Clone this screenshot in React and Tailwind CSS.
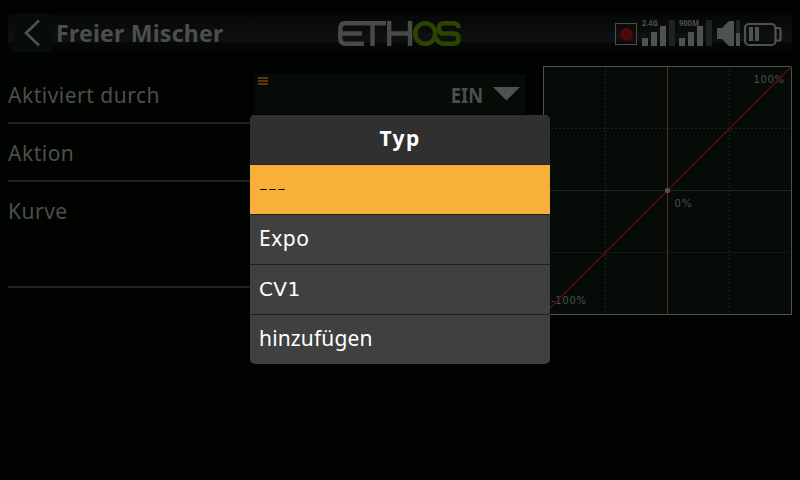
const LABEL = "font-['Noto_Sans',sans-serif] whitespace-nowrap";

function SettingRow({ label, className, children }) {
  return (
    <div className={`flex w-[517px] justify-between border-b-2 border-[#1f2320] ${className}`}>
      <span className="pt-[14px] text-[21px] leading-[30px] tracking-[0.5px] text-[#4c4f4c]">{label}</span>
      {children}
    </div>
  );
}

function BackButton() {
  return (
    <div className="ml-[6px] h-[38px] w-[38px] bg-[#070b09]">
      <svg width="38" height="38" fill="none" stroke="#4f524f" strokeWidth="2.6">
        <path d="M25 6.500 12 19 25 31.500" />
      </svg>
    </div>
  );
}

function Logo() {
  return (
    <svg className="absolute left-[338px] top-[20px]" width="126" height="28" fill="none">
      <g stroke="#484a48" strokeWidth="4.400">
        <path d="M26 3.300H7.500Q2.300 3.300 2.300 8.500V18.500Q2.300 23.700 7.500 23.700H26M3 13.500H24M22 3.300H48M34.500 4V26M51.200 1V26M72 1V26M52 13.500H72" />
      </g>
      <g stroke="#2b4400" strokeWidth="4.600">
        <rect x="77.300" y="3.300" width="20" height="20.400" rx="10" />
        <path d="M120.500 8Q120.500 3.300 115.500 3.300H106Q101 3.300 101 8.400T106 13.500H115.500Q120.500 13.500 120.500 18.600T115.500 23.700H106Q100 23.700 98.500 18" />
      </g>
    </svg>
  );
}

function StatusIcons() {
  return (
    <svg className="absolute left-[610px] top-[16px]" width="176" height="34" fontFamily="Noto Sans, sans-serif">
      <rect x="5.500" y="7.500" width="21" height="21" fill="none" stroke="#4b4e4b" />
      <circle cx="16.500" cy="18.500" r="6.500" fill="#500707" />
      <g fill="#4f534f">
        <path d="M32 22h6v8h-6zM41 16h6v14h-6zM50 10h6v20h-6z" />
        <path d="M69 22h6v8h-6zM78 16h6v14h-6zM87 10h6v20h-6z" />
        <path d="M107 12h5L119 5h5V30h-5L112 23h-5zM126 17h4v13h-4z" />
        <path d="M139 11h4v14h-4zM145 11h4v14h-4z" />
      </g>
      <path d="M59 4h6v26h-6zM96 4h6v26h-6zM126 4h4v13h-4z" fill="#1f2320" />
      <g fill="#4b4e4b" fontSize="8" fontWeight="700">
        <text x="32" y="10" textLength="16" lengthAdjust="spacingAndGlyphs">2.4G</text>
        <text x="69" y="10" textLength="20" lengthAdjust="spacingAndGlyphs">900M</text>
      </g>
      <g fill="none" stroke="#4f534f" strokeWidth="2.200">
        <rect x="135" y="8" width="30.500" height="21" rx="4" />
        <path d="M166 12h3q1.500 0 1.500 1.500v9.500q0 1.500-1.500 1.500h-3" />
      </g>
    </svg>
  );
}

function CurveChart() {
  return (
    <svg className="ml-[18px] mt-[14px] bg-[#060b07]" width="249" height="249" fontFamily="DejaVu Sans, sans-serif" fontSize="10">
      <g fill="none" stroke="#1f2420" shapeRendering="crispEdges">
        <path d="M0 62.500H249M0 186.500H249M62.500 0V249M186.500 0V249" strokeDasharray="2 2" />
        <path d="M0 124.500H249" />
        <path d="M124.500 0V249" stroke="#50350d" />
        <rect x="0.500" y="0.500" width="248" height="248" stroke="#4f524f" />
      </g>
      <g fill="#4c4f4c">
        <text x="210.500" y="16.500" textLength="30.500">100%</text>
        <text x="131.500" y="140.500" textLength="17">0%</text>
        <text x="8" y="237.500" textLength="35">-100%</text>
      </g>
      <path d="M0 249 249 0" stroke="#530c0c" strokeWidth="1.300" />
      <circle cx="124.500" cy="124.500" r="2.600" fill="#505350" />
    </svg>
  );
}

const choices = [
  { text: "---", style: "bg-[#f9b039] pt-[8px] font-['DejaVu_Sans',sans-serif] text-[24px] font-extralight tracking-[0.3px] text-black" },
  { text: "Expo", style: "pt-[8px] text-[21px] tracking-[0.5px] text-white" },
  { text: "CV1", style: "pt-[9px] font-['DejaVu_Sans',sans-serif] text-[20px] tracking-[0.4px] text-white" },
  { text: "hinzufügen", style: "pt-[8px] text-[21px] tracking-[0.15px] text-white" },
];

function TypeDialog() {
  return (
    <div className="absolute left-[250px] top-[115px] w-[300px] overflow-hidden rounded-[5px] bg-[#404040]">
      <div className="h-[49px] bg-[#303030] pt-[8px] text-center text-[21px] font-bold leading-[30px] tracking-[1.4px] text-white">Typ</div>
      {choices.map(({ text, style }) => (
        <div key={text} className={`h-[50px] border-t border-[#202020] pl-[9px] leading-[30px] ${style}`}>
          {text}
        </div>
      ))}
    </div>
  );
}

export default function App() {
  return (
    <div className={`relative h-[480px] w-[800px] overflow-hidden bg-[#000300] ${LABEL}`}>
      <header className="mx-2 flex h-[52px] items-center bg-[linear-gradient(to_bottom,#000300_0px,#000300_13px,#050807_16px,#080b09_23px,#0b0e0c_33px,#0f1110_34px,#0e100f_41px,#060807_43px,#030504_50px,#000200_52px)] pt-[14px]">
        <BackButton />
        <h1 className="ml-[4px] text-[23px] font-bold leading-[38px] tracking-[0.25px] text-[#4c4f4c]">Freier Mischer</h1>
        <Logo />
        <StatusIcons />
      </header>
      <main className="ml-2 flex">
        <div className="pt-[14px]">
          <SettingRow label="Aktiviert durch" className="h-[58px]">
            <div className="mt-[8px] flex h-[40px] w-[270px] justify-between bg-[#060b07]">
              <svg className="ml-[3px] mt-[3px]" width="10" height="8" fill="#5b390e">
                <path d="M0 0h10v2H0zM0 3h10v2H0zM0 6h10v2H0z" />
              </svg>
              <div className="flex pr-[5px] pt-[6px]">
                <span className="mr-[10px] origin-right scale-x-[0.87] text-[21px] font-bold leading-[30px] text-[#4c4f4c]">EIN</span>
                <svg className="mt-[7px]" width="27" height="14" fill="#4f534f">
                  <path d="M0 0H27L13.500 13.500Z" />
                </svg>
              </div>
            </div>
          </SettingRow>
          <SettingRow label="Aktion" className="h-[58px]" />
          <SettingRow label="Kurve" className="h-[106px]" />
        </div>
        <CurveChart />
      </main>
      <TypeDialog />
    </div>
  );
}
